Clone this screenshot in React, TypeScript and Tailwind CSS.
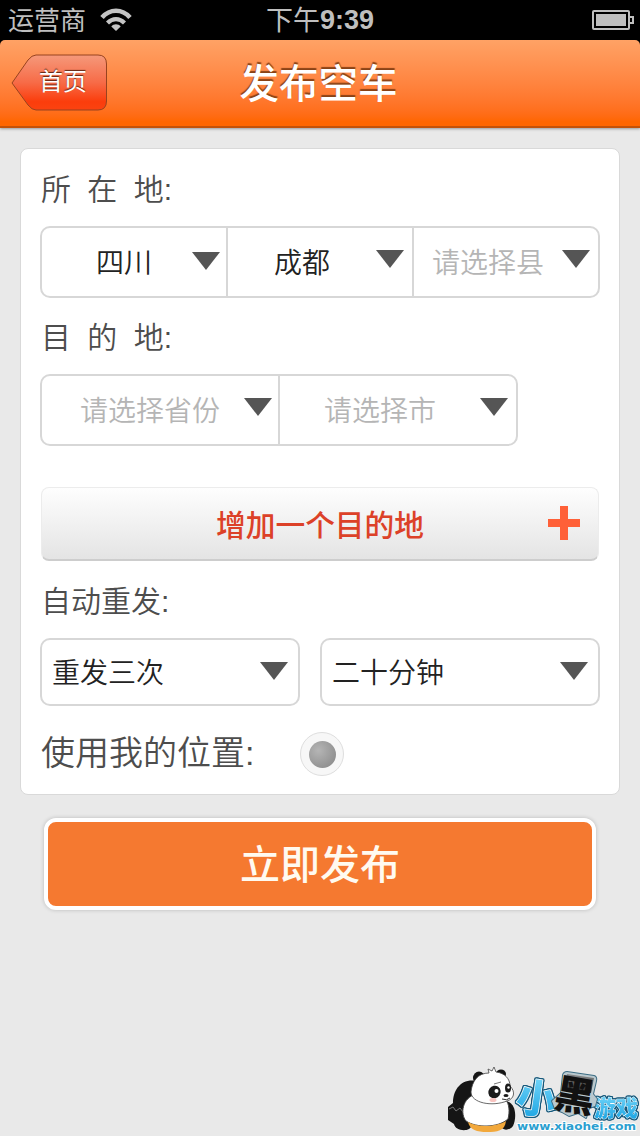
import clsx from "clsx";
import { ReactNode } from "react";

type SelectProps = {
  value: string;
  placeholder?: boolean;
  className?: string;
  arrowClassName?: string;
};

function Select({ value, placeholder = false, className, arrowClassName = "mb-1.5" }: SelectProps) {
  return (
    <button
      type="button"
      className={clsx(
        "flex items-center justify-between border-[#d7d7d7] text-[28px] leading-none font-[350] whitespace-nowrap",
        placeholder ? "text-[#b5b5b5]" : "text-[#222]",
        className,
      )}
    >
      <span className="pt-1">{value}</span>
      <svg className={clsx("shrink-0", arrowClassName)} width="28" height="18" viewBox="0 0 28 18">
        <path d="M0 0H28L14 18Z" fill="#555" />
      </svg>
    </button>
  );
}

function SelectGroup({ className, children }: { className?: string; children: ReactNode }) {
  return (
    <div className={clsx("flex rounded-[10px] border-2 border-[#d7d7d7] bg-white", className)}>
      {children}
    </div>
  );
}

function StatusBar() {
  return (
    <div className="grid h-10 grid-cols-3 items-center bg-black text-[#bfbfbf]">
      <div className="flex items-center gap-[14px] pl-2 text-[26px] leading-none">
        <span className="pt-0.5">运营商</span>
        <svg width="32" height="24" viewBox="0 0 32 24" fill="none" stroke="#c4c4c4">
          <path d="M2 9.5C10 .5 22 .5 30 9.5" strokeWidth="4.6" />
          <path d="M7.5 15C12.5 9.8 19.5 9.8 24.5 15" strokeWidth="4.2" />
          <path d="M16 23L11.3 18.5C13.5 15.6 18.5 15.6 20.7 18.5Z" fill="#c4c4c4" stroke="none" />
        </svg>
      </div>
      <div className="flex items-center justify-center text-[27px] leading-none">
        <span className="pt-0.5">下午</span>
        <span className="font-bold">9:39</span>
      </div>
      <div className="flex justify-end pr-[6px]">
        <svg width="42" height="20" viewBox="0 0 42 20" fill="none" stroke="#bfbfbf" strokeWidth="2">
          <rect x="1" y="1" width="36" height="18" rx="1" />
          <rect x="4" y="4" width="30" height="12" fill="#bfbfbf" stroke="none" />
          <path d="M38 7H41V13H38" />
        </svg>
      </div>
    </div>
  );
}

function Header() {
  return (
    <div className="bg-black">
      <header className="grid h-[88px] grid-cols-[1fr_auto_1fr] items-center rounded-t-[5px] border-b-2 border-[#c45208] bg-linear-to-b from-[#ffa265] to-[#ff6600] to-95% shadow-[0_1px_3px_rgba(0,0,0,0.35)]">
        <button type="button" className="relative ml-[11px] flex h-[58px] w-[97px] items-center justify-center pl-2">
          <svg className="absolute inset-0" width="97" height="58" viewBox="0 0 97 58">
            <defs>
              <linearGradient id="back" x1="0" y1="0" x2="0" y2="1">
                <stop offset="0" stopColor="#f5997b" />
                <stop offset="0.5" stopColor="#f76b47" />
                <stop offset="0.85" stopColor="#fb3d0c" />
                <stop offset="1" stopColor="#fb4310" />
              </linearGradient>
            </defs>
            <path
              d="M25 1H87Q95.5 1 95.5 10V47Q95.5 56 87 56H25Q21 56 17 51L1 29L17 6Q21 1 25 1Z"
              fill="url(#back)"
              stroke="#98431f"
            />
          </svg>
          <span className="relative pr-px pb-0.5 text-2xl leading-none text-white [text-shadow:0_-1px_1px_#5c2310]">
            首页
          </span>
        </button>
        <h1 className="pt-[3px] pr-[3px] text-[39.5px] leading-none font-medium text-white [text-shadow:0_-2px_1px_#8a4216]">
          发布空车
        </h1>
      </header>
    </div>
  );
}

function Panda() {
  return (
    <svg width="72" height="72" viewBox="0 0 72 72">
      <path d="M29 17C13 14 5 26 5 39L0 43V56L6 60C7 67 22 69 24 61L28 45Z" fill="#151515" />
      <path d="M58 37C68 39 69 53 65 62C61 67 54 67 52 61Z" fill="#151515" />
      <path d="M1 45L5 43L8 47L12 44L15 48" fill="none" stroke="#777" />
      <path d="M28 30C14 34 12 50 18 57C28 64 50 64 60 55C62 47 61 40 58 36Z" fill="#fff" stroke="#444" />
      <path d="M20 58C30 64 48 63 58 57C57 67 49 68 39 68C29 68 22 66 20 58Z" fill="#f2a83b" />
      <ellipse cx="31" cy="14" rx="6" ry="6.5" fill="#151515" />
      <ellipse cx="53" cy="10" rx="5" ry="4.5" fill="#151515" />
      <path
        d="M41 9L40 5L44 7L46 3L48 8C57 9 62 15 62 22C68 28 66 35 59 37C44 43 23 39 23 28C24 17 30 9 41 9Z"
        fill="#fff"
        stroke="#444"
        strokeWidth=".8"
      />
      <path d="M46 20L53 18" stroke="#555" strokeWidth=".8" />
      <ellipse cx="46.5" cy="28" rx="6" ry="6.5" fill="#1b1b1b" transform="rotate(35 46.5 28)" />
      <ellipse cx="60" cy="24" rx="3" ry="4.5" fill="#1b1b1b" />
      <circle cx="48.5" cy="27" r="2" fill="#fff" />
      <circle cx="60.5" cy="23.5" r="1.2" fill="#fff" />
      <ellipse cx="58" cy="31.5" rx="2.5" ry="1.5" fill="#1b1b1b" />
      <path d="M54 35Q59 37 62 34" fill="none" stroke="#333" />
      <ellipse cx="45" cy="36" rx="3.5" ry="2" fill="#f8c4c0" />
    </svg>
  );
}

function SiteLogo() {
  return (
    <div className="absolute right-0 bottom-0 flex items-end">
      <Panda />
      <svg
        className="-ml-1 overflow-visible"
        width="124"
        height="90"
        viewBox="0 0 124 90"
        fontFamily="Noto Sans CJK SC, sans-serif"
        fontWeight="900"
        paintOrder="stroke"
        strokeLinejoin="round"
      >
        <defs>
          <linearGradient id="sky" x1="0" y1="0" x2="0" y2="1">
            <stop offset="0.2" stopColor="#6fd3f8" />
            <stop offset="1" stopColor="#129fe0" />
          </linearGradient>
          <linearGradient id="plate" x1="0" y1="0" x2="0" y2="1">
            <stop offset="0" stopColor="#8a8a8a" />
            <stop offset="1" stopColor="#303030" />
          </linearGradient>
        </defs>
        <g
          className="[filter:drop-shadow(1px_0_#15597c)_drop-shadow(-1px_0_#15597c)_drop-shadow(0_1px_#15597c)_drop-shadow(0_-1px_#15597c)]"
          stroke="#fff"
          strokeWidth="1.5"
          fill="url(#sky)"
        >
          <text x="1" y="67" fontSize="40" transform="rotate(8 20 50)">小</text>
          <text x="78" y="70" fontSize="22" strokeWidth="1">游戏</text>
        </g>
        <path
          d="M47 29Q48 26 51 26L78 30Q81 31 80 35L77 48L81 53L79 60L73 62L70 72L62 67L53 70L46 66L39 63L36 55L45 47Z"
          fill="#b9c8ce"
          stroke="#3c6d84"
          strokeWidth="2"
        />
        <path d="M51 28L78 32L75 47L48 43Z" fill="url(#plate)" />
        <text x="39" y="64" fontSize="40" fill="#111" transform="rotate(10 58 50)">黑</text>
        <text
          x="1"
          y="84"
          fontFamily="DejaVu Sans, sans-serif"
          fontSize="11"
          fontWeight="700"
          textLength="119"
          lengthAdjust="spacingAndGlyphs"
          fill="#2b9fd0"
          stroke="#fff"
          strokeWidth="2"
        >
          www.xiaohei.com
        </text>
      </svg>
    </div>
  );
}

export default function App() {
  return (
    <div className="relative h-[1136px] w-[640px] overflow-hidden bg-[#e9e9e9] font-['Liberation_Sans','Noto_Sans_CJK_SC',sans-serif]">
      <StatusBar />
      <Header />

      <main className="px-5 pt-5">
        <section className="h-[647px] rounded-lg border border-[#d9d9d9] bg-white px-[19px]">
          <h2 className="flex h-[77px] items-center pt-1 pl-px text-[30px] leading-none font-[350] text-[#4d4d4d] [word-spacing:8px]">
            所 在 地:
          </h2>
          <SelectGroup className="h-[72px]">
            <Select value="四川" className="w-[184px] pr-1.5 pl-[54px]" arrowClassName="mb-0.5" />
            <Select value="成都" className="w-[186px] border-l-2 pr-2 pl-[46px]" />
            <Select value="请选择县" placeholder className="w-[186px] border-l-2 pr-2 pl-[18px]" />
          </SelectGroup>

          <h2 className="flex h-[76px] items-center pt-1 pl-px text-[30px] leading-none font-[350] text-[#4d4d4d] [word-spacing:8px]">
            目 的 地:
          </h2>
          <SelectGroup className="h-[72px] w-[478px]">
            <Select value="请选择省份" placeholder className="w-[236px] pr-1.5 pl-[38px]" />
            <Select value="请选择市" placeholder className="w-[238px] border-l-2 pr-2 pl-11" />
          </SelectGroup>

          <button
            type="button"
            className="mx-px mt-[41px] grid h-[74px] w-[558px] grid-cols-[1fr_auto_1fr] items-center rounded-lg border border-b-2 border-[#ececec] border-b-[#cdcdcd] bg-linear-to-b from-[#fefefe] to-[#e4e4e4] px-[17px]"
          >
            <span />
            <span className="pt-1 text-[29.7px] leading-none font-medium text-[#dc4128]">增加一个目的地</span>
            <svg className="justify-self-end" width="34" height="36" viewBox="0 0 34 36">
              <path d="M13 0H21V13H33V21H21V34H13V21H1V13H13Z" fill="#ff6038" />
            </svg>
          </button>

          <h2 className="flex h-[77px] items-center pt-1 pl-px text-[30px] leading-none font-[350] text-[#4d4d4d]">
            自动重发:
          </h2>
          <div className="flex gap-5">
            <SelectGroup className="h-[68px] w-[260px]">
              <Select value="重发三次" className="w-full px-2.5" arrowClassName="mb-0.5" />
            </SelectGroup>
            <SelectGroup className="h-[68px] w-[280px]">
              <Select value="二十分钟" className="w-full px-2.5" arrowClassName="mb-0.5" />
            </SelectGroup>
          </div>

          <div className="flex h-[88px] items-center pt-2">
            <span className="w-[260px] pb-0.5 pl-px text-[34px] leading-none font-[350] text-[#4d4d4d]">
              使用我的位置:
            </span>
            <span className="flex size-11 items-center justify-center rounded-full border border-[#dedede] bg-[#f7f7f7]">
              <span className="size-[27px] rounded-full bg-radial-[at_35%_35%] from-[#b5b5b5] to-[#858585]" />
            </span>
          </div>
        </section>

        <button
          type="button"
          className="mx-6 mt-[23px] h-[92px] w-[552px] rounded-xl border-4 border-white bg-[#f57930] pt-0.5 text-[40px] leading-none font-medium text-[#fffaf0] shadow-[0_0_4px_rgba(0,0,0,0.2)]"
        >
          立即发布
        </button>
      </main>

      <SiteLogo />
    </div>
  );
}
